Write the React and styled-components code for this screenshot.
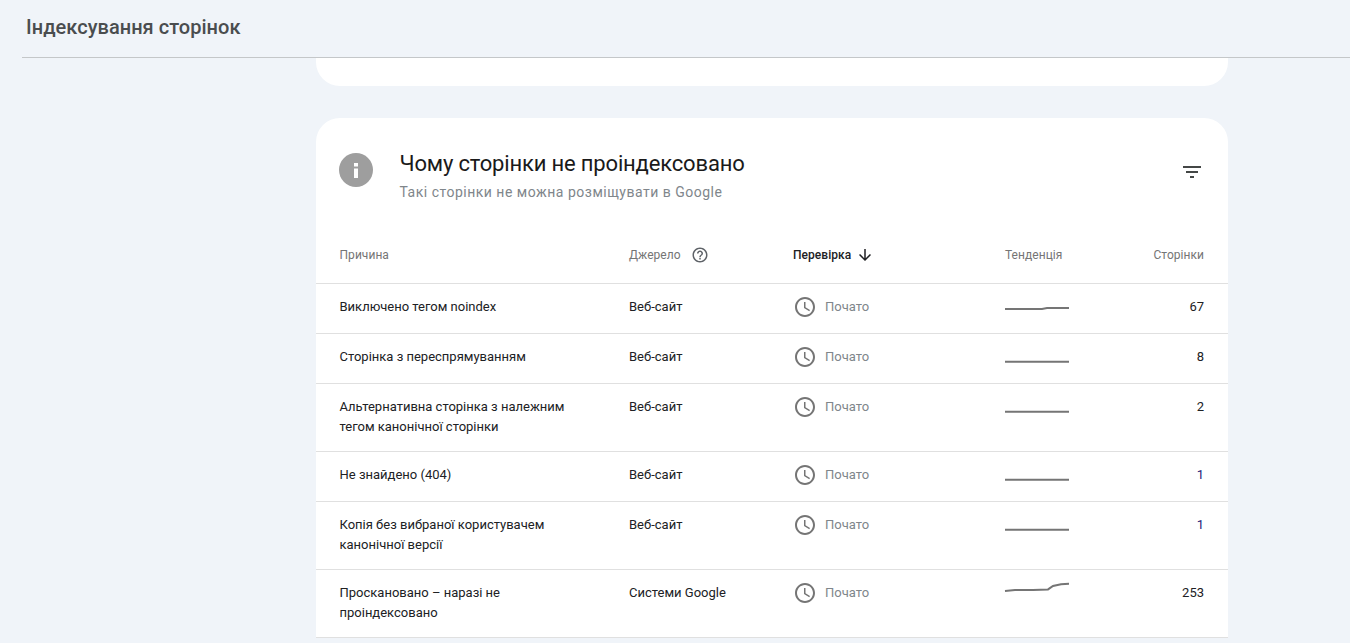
import React from "react"
import styled, { createGlobalStyle } from "styled-components"

const GlobalStyle = createGlobalStyle`
  html, body {
    margin: 0;
    height: 100%;
    overflow: hidden;
    background: #f0f4f9;
    font-family: Roboto, "Noto Sans", sans-serif;
  }
`

const Page = styled.div`
  height: 643px;
  overflow: hidden;
  background: #f0f4f9;
`

const TopBar = styled.header`
  box-sizing: border-box;
  height: 58px;
  margin-left: 22px;
  padding: 15px 0 0 4px;
  border-bottom: 1px solid #c4c7c9;
`

const PageTitle = styled.h1`
  margin: 0;
  font-size: 20px;
  line-height: 24px;
  font-weight: 500;
  letter-spacing: 0.03px;
  color: #4a4d4f;
`

const Content = styled.main`
  width: 912px;
  margin-left: 316px;
  display: flex;
  flex-direction: column;
  gap: 32px;
`

const CardTail = styled.div`
  height: 28px;
  background: #fff;
  border-radius: 0 0 24px 24px;
`

const Card = styled.section`
  background: #fff;
  border-radius: 24px 24px 0 0;
`

const CardHead = styled.div`
  box-sizing: border-box;
  height: 114px;
  padding: 32px 24px 0 23px;
  display: flex;
  align-items: flex-start;
`

const InfoBadge = styled.div`
  width: 34px;
  height: 34px;
  margin-top: 3px;
  border-radius: 50%;
  background: #9e9e9e;
  display: flex;
  align-items: center;
  justify-content: center;
`

const Headings = styled.div`
  margin-left: 26.5px;
  flex: 1;
`

const CardTitle = styled.h2`
  margin: 0;
  font-size: 22px;
  line-height: 28px;
  font-weight: 400;
  letter-spacing: -0.17px;
  color: #1a1a1a;
`

const CardSub = styled.p`
  margin: 4px 0 0;
  font-size: 14px;
  line-height: 20px;
  letter-spacing: 0.5px;
  color: #80868b;
`

const FilterButton = styled.div`
  width: 24px;
  height: 24px;
  margin: 10px 0 0 0;
  color: #444746;
`

const Row = styled.div`
  box-sizing: border-box;
  display: grid;
  grid-template-columns: 289px 164px 212px 64px 1fr;
  padding: ${p => (p.$head ? "0 24px" : "13px 24px 14px")};
  min-height: ${p => (p.$head ? "52px" : "50px")};
  border-bottom: 1px solid #e0e0e0;
  font-size: 13px;
  line-height: 20px;
  color: #202124;
`

const HeadCell = styled.div`
  display: flex;
  align-items: center;
  height: 44px;
  margin-top: 1px;
  font-size: 12px;
  letter-spacing: 0.04px;
  font-weight: ${p => (p.$active ? 500 : 400)};
  color: ${p => (p.$active ? "#202124" : "#757575")};
  justify-content: ${p => (p.$end ? "flex-end" : "flex-start")};
`

const ReasonHead = styled(HeadCell)`
  margin-left: -0.5px;
`

const HeadIcon = styled.svg`
  width: 18px;
  height: 18px;
  margin-left: ${p => p.$gap}px;
  fill: ${p => (p.$dark ? "#202124" : "#5f6368")};
`

const Reason = styled.div`
  max-width: 240px;
  margin-left: -0.5px;
`

const Status = styled.div`
  display: flex;
  height: 20px;
  align-items: center;
  gap: 8px;
  color: #80868b;
`

const ClockIcon = styled.svg`
  width: 24px;
  height: 24px;
  flex: none;
  fill: #757575;
`

const Spark = styled.svg`
  display: block;
  width: 64px;
  height: 20px;
  overflow: visible;
  fill: none;
  stroke: #757575;
  stroke-width: 2;
`

const Count = styled.div`
  text-align: right;
  color: ${p => (p.$visited ? "#1f1a7a" : "#202124")};
`

const rows = [
  { reason: "Виключено тегом noindex", source: "Веб-сайт", line: "M0 12H37L42 11H64", count: 67 },
  { reason: "Сторінка з переспрямуванням", source: "Веб-сайт", line: "M0 14.8H64", count: 8 },
  { reason: "Альтернативна сторінка з належним тегом канонічної сторінки", source: "Веб-сайт", line: "M0 14.8H64", count: 2 },
  { reason: "Не знайдено (404)", source: "Веб-сайт", line: "M0 14.8H64", count: 1, visited: true },
  { reason: "Копія без вибраної користувачем канонічної версії", source: "Веб-сайт", line: "M0 14.8H64", count: 1, visited: true },
  { reason: "Проскановано – наразі не проіндексовано", source: "Системи Google", line: "M0 8L10 7H28L43 6.4L48 3L56 1.2L64 .8", count: 253 },
]

const App = () => (
  <Page>
    <GlobalStyle />
    <TopBar>
      <PageTitle>Індексування сторінок</PageTitle>
    </TopBar>
    <Content>
      <CardTail />
      <Card>
        <CardHead>
          <InfoBadge>
            <svg width="24" height="24" viewBox="0 0 24 24" fill="#fff">
              <path d="M10 10.5h4V20h-4zM10 5h4v3.5h-4z" />
            </svg>
          </InfoBadge>
          <Headings>
            <CardTitle>Чому сторінки не проіндексовано</CardTitle>
            <CardSub>Такі сторінки не можна розміщувати в Google</CardSub>
          </Headings>
          <FilterButton>
            <svg width="24" height="24" viewBox="0 0 24 24" fill="currentColor">
              <path d="M10 18h4v-2h-4v2zM3 6v2h18V6H3zm3 7h12v-2H6v2z" />
            </svg>
          </FilterButton>
        </CardHead>
        <Row $head>
          <ReasonHead>Причина</ReasonHead>
          <HeadCell>
            Джерело
            <HeadIcon $gap={10} viewBox="0 0 24 24">
              <path d="M11 18h2v-2h-2v2zm1-16C6.48 2 2 6.48 2 12s4.48 10 10 10 10-4.48 10-10S17.52 2 12 2zm0 18c-4.41 0-8-3.59-8-8s3.59-8 8-8 8 3.59 8 8-3.59 8-8 8zm0-14c-2.21 0-4 1.79-4 4h2c0-1.1.9-2 2-2s2 .9 2 2c0 2-3 1.75-3 5h2c0-2.25 3-2.5 3-5 0-2.21-1.79-4-4-4z" />
            </HeadIcon>
          </HeadCell>
          <HeadCell $active>
            Перевірка
            <HeadIcon $gap={5} $dark viewBox="0 0 24 24">
              <path d="M20 12l-1.41-1.41L13 16.17V4h-2v12.17l-5.58-5.59L4 12l8 8 8-8z" />
            </HeadIcon>
          </HeadCell>
          <HeadCell>Тенденція</HeadCell>
          <HeadCell $end>Сторінки</HeadCell>
        </Row>
        {rows.map(row => (
          <Row key={row.reason}>
            <Reason>{row.reason}</Reason>
            <div>{row.source}</div>
            <Status>
              <ClockIcon viewBox="0 0 24 24">
                <path d="M11.99 2C6.47 2 2 6.48 2 12s4.47 10 9.99 10C17.52 22 22 17.52 22 12S17.52 2 11.99 2zM12 20c-4.42 0-8-3.58-8-8s3.58-8 8-8 8 3.58 8 8-3.58 8-8 8zm.5-13H11v6l5.25 3.15.75-1.23-4.5-2.67z" />
              </ClockIcon>
              Почато
            </Status>
            <Spark viewBox="0 0 64 20">
              <path d={row.line} />
            </Spark>
            <Count $visited={row.visited}>{row.count}</Count>
          </Row>
        ))}
      </Card>
    </Content>
  </Page>
)

export default App
